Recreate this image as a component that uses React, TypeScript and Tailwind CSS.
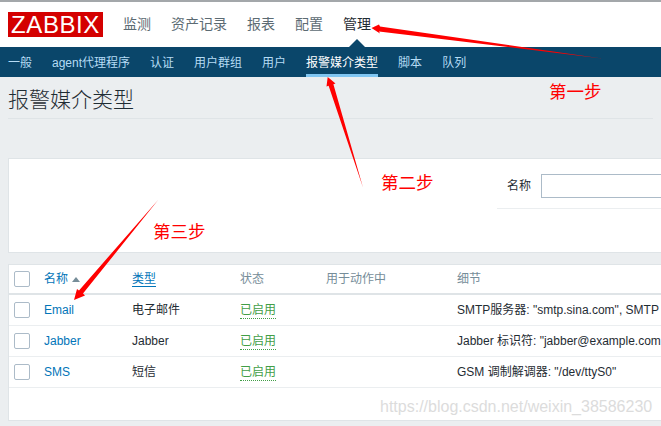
const font = { fontFamily: '"Liberation Sans", "Noto Sans CJK SC", sans-serif' };

const topNav = ["监测", "资产记录", "报表", "配置", "管理"];
const subNav = ["一般", "agent代理程序", "认证", "用户群组", "用户", "报警媒介类型", "脚本", "队列"];

const rows = [
  { name: "Email", type: "电子邮件", details: 'SMTP服务器: "smtp.sina.com", SMTP' },
  { name: "Jabber", type: "Jabber", details: 'Jabber 标识符: "jabber@example.com' },
  { name: "SMS", type: "短信", details: 'GSM 调制解调器: "/dev/ttyS0"' },
];

const cols = "grid grid-cols-[30px_88px_108px_86px_131px_200px] pl-[5px] items-center whitespace-nowrap";

function Checkbox() {
  return <div className="w-4 h-4 bg-white border border-[#acbbc8] rounded-[2px]" />;
}

function Arrows() {
  return (
    <svg className="absolute left-0 top-0 pointer-events-none" width="661" height="426" viewBox="0 0 661 426">
      <polygon fill="#ff0000" points="602,58.5 379,31.5 380,33.5 371.5,28 379,24.5 380,26.5" />
      <polygon fill="#ff0000" points="363,187.5 333.4,84.2 335.5,83.5 327.7,77 326.5,86.5 328.6,85.8" />
      <polygon fill="#ff0000" points="158.5,199.5 83,293.6 85,295.5 74,300 77,289 79,290.4" />
    </svg>
  );
}

export default function App() {
  return (
    <div className="relative w-[661px] h-[426px] overflow-hidden bg-[#ebeef0] text-[12px] text-[#1f2c33]" style={font}>
      <div className="h-[2px] bg-[#a3a7aa]" />
      <header className="relative h-[45px] bg-white flex items-center pl-2">
        <div className="w-[95px] h-[25px] bg-[#d40000] text-white text-[24px] leading-[25px] text-center tracking-[0.6px]">ZABBIX</div>
        <nav className="flex gap-5 ml-5 text-[14px] text-[#5c6b73]">
          {topNav.map((item) => (
            <span key={item} className={item === "管理" ? "text-[#1f2c33]" : ""}>{item}</span>
          ))}
        </nav>
        <div className="absolute left-[349px] bottom-0 w-0 h-0 border-x-8 border-x-transparent border-b-8 border-b-[#0a466a]" />
      </header>
      <nav className="h-[30px] bg-[#0a466a] flex gap-5 pl-2 text-[#b5dcf5]">
        {subNav.map((item) => (
          <span
            key={item}
            className={
              item === "报警媒介类型"
                ? "pt-[7px] text-white border-b-[3px] border-[#80c6f2]"
                : "pt-[7px]"
            }
          >
            {item}
          </span>
        ))}
      </nav>
      <div className="mx-2 h-[42px] border-b border-[#dfe4e7] pt-[9px] text-[21px] leading-[28px] font-light">报警媒介类型</div>
      <section className="ml-2 mt-[39px] h-[95px] bg-white border border-[#dfe4e7] border-r-0">
        <div className="ml-[488px] h-[35px] mt-[15px] border-b border-[#ebeef0] flex items-start pl-[10px]">
          <span className="mt-[3px] leading-[18px] whitespace-nowrap">名称</span>
          <div className="ml-[10px] w-[130px] shrink-0 h-6 bg-white border border-[#acbbc8]" />
        </div>
      </section>
      <section className="ml-2 mt-[11px] h-[157px] bg-white border border-[#dfe4e7] border-r-0">
        <div className={cols + " h-[28px] border-b-2 border-[#dfe4e7] box-content"}>
          <Checkbox />
          <span className="text-[#0275b8]">
            名称
            <span className="ml-[4px] inline-block w-0 h-0 align-[1px] border-x-[4px] border-x-transparent border-b-[5px] border-b-[#768d99]" />
          </span>
          <span><span className="inline-block leading-[13px] text-[#0275b8] border-b border-[#0275b8]">类型</span></span>
          <span className="text-[#768d99]">状态</span>
          <span className="text-[#768d99]">用于动作中</span>
          <span className="text-[#768d99]">细节</span>
        </div>
        {rows.map((row) => (
          <div key={row.name} className={cols + " h-[30px] border-b border-[#ebeef0] box-content"}>
            <Checkbox />
            <span className="text-[#0275b8]">{row.name}</span>
            <span>{row.type}</span>
            <span><span className="inline-block leading-[15px] text-[#429e47] border-b border-dotted border-[#429e47]">已启用</span></span>
            <span />
            <span>{row.details}</span>
          </div>
        ))}
      </section>
      <div className="absolute left-[380px] top-[397px] text-[16px] leading-[20px] text-[#dcdcdc] whitespace-nowrap">https://blog.csdn.net/weixin_38586230</div>
      <Arrows />
      <span className="absolute left-[549px] top-[81px] text-[17.5px] leading-[22px] text-[#ff0000]">第一步</span>
      <span className="absolute left-[381px] top-[172px] text-[17.5px] leading-[22px] text-[#ff0000]">第二步</span>
      <span className="absolute left-[153px] top-[221px] text-[17.5px] leading-[22px] text-[#ff0000]">第三步</span>
    </div>
  );
}
